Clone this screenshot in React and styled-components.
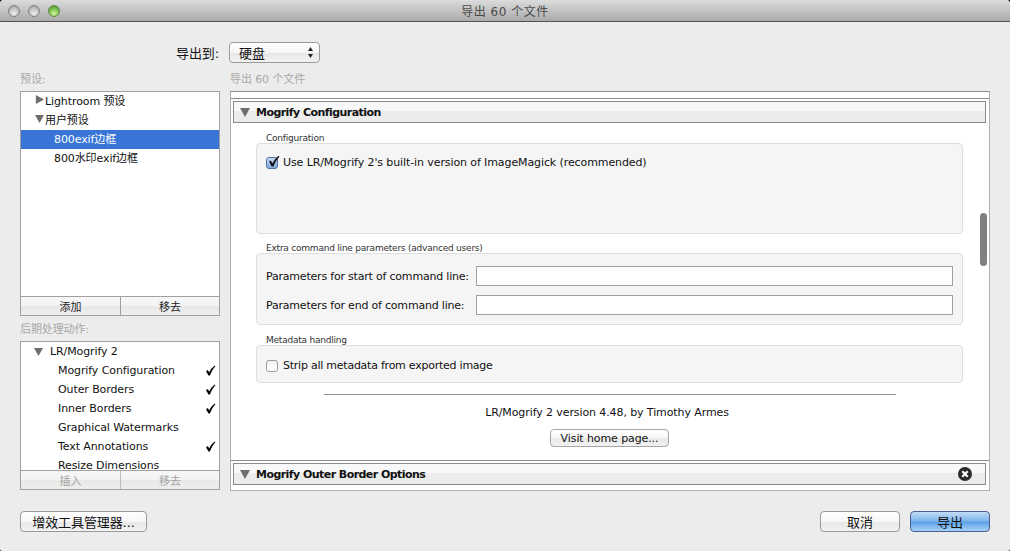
import React from 'react';
import styled, { createGlobalStyle } from 'styled-components';

const uiFont = `'DejaVu Sans', 'Noto Sans CJK SC', sans-serif`;

const presets = [
  { label: 'Lightroom 预设', depth: 0, arrow: 'right' },
  { label: '用户预设', depth: 0, arrow: 'down' },
  { label: '800exif边框', depth: 1, selected: true },
  { label: '800水印exif边框', depth: 1 }
];

const actions = [
  { label: 'Mogrify Configuration', on: true },
  { label: 'Outer Borders', on: true },
  { label: 'Inner Borders', on: true },
  { label: 'Graphical Watermarks' },
  { label: 'Text Annotations', on: true },
  { label: 'Resize Dimensions' }
];

const Triangle = ({ dir = 'down', size = 10 }) => (
  <svg width={size} height={size} viewBox="0 0 10 10">
    <path d={dir === 'down' ? 'M0 1h10L5 10z' : 'M1 0l9 5-9 5z'} fill="#6e6e6e" />
  </svg>
);

const Tick = () => (
  <svg width="11" height="11" viewBox="0 0 11 11">
    <path d="M1 6.2l1.8-1.2 1.5 2.4C5.6 4.500 7.400 2.200 9.800 0.500L10.400 1.200C8 3.800 6.300 6.800 4.900 10.600L3.500 10.600z" fill="#000" />
  </svg>
);

const App = () => (
  <Shell>
    <GlobalStyle />
    <TitleBar>
      <Lights>
        <Light />
        <Light />
        <Light $green />
      </Lights>
      <Title>导出 60 个文件</Title>
    </TitleBar>

    <Body>
      <ExportRow>
        <ExportLabel>导出到:</ExportLabel>
        <Select>
          <span>硬盘</span>
          <svg width="5" height="11" viewBox="0 0 5 11">
            <path d="M2.500 0L5 4H0zM2.500 11L0 7h5z" fill="#222" />
          </svg>
        </Select>
      </ExportRow>

      <Columns>
        <Sidebar>
          <FadedLabel>预设:</FadedLabel>
          <ListFrame $height={225}>
            <ListBody>
              {presets.map(p => (
                <PresetRow key={p.label} $depth={p.depth} $selected={p.selected}>
                  {p.arrow && <Triangle dir={p.arrow} size={9} />}
                  <span>{p.label}</span>
                </PresetRow>
              ))}
            </ListBody>
            <ButtonPair>
              <PairButton>添加</PairButton>
              <PairButton>移去</PairButton>
            </ButtonPair>
          </ListFrame>

          <ActionsLabel>后期处理动作:</ActionsLabel>
          <ListFrame $height={149}>
            <ListBody>
              <ActionGroup>
                <Triangle size={9} />
                <span>LR/Mogrify 2</span>
              </ActionGroup>
              {actions.map(a => (
                <ActionRow key={a.label}>
                  <span>{a.label}</span>
                  {a.on && <Tick />}
                </ActionRow>
              ))}
            </ListBody>
            <ButtonPair $disabled>
              <PairButton $disabled>插入</PairButton>
              <PairButton $disabled>移去</PairButton>
            </ButtonPair>
          </ListFrame>
        </Sidebar>

        <Main>
          <FadedLabel>导出 60 个文件</FadedLabel>
          <Panel>
            <TopStrip />
            <SectionHeader>
              <Triangle />
              <strong>Mogrify Configuration</strong>
            </SectionHeader>
            <PanelContent>
              <GroupLabel>Configuration</GroupLabel>
              <Group $height={91}>
                <CheckRow $spacing={-0.1}>
                  <CheckBox $on>
                    <svg width="14" height="14" viewBox="0 0 14 14">
                      <path d="M3 6.500l1.800-1 1.700 3C8 5.500 10 3 12.500 0.800L13.400 1.800C10.800 4.500 8.800 7.800 7.400 11.500H5.700z" fill="#111" />
                    </svg>
                  </CheckBox>
                  <span>Use LR/Mogrify 2's built-in version of ImageMagick (recommended)</span>
                </CheckRow>
              </Group>

              <GroupLabel $top={9}>Extra command line parameters (advanced users)</GroupLabel>
              <Group $height={72}>
                <ParamRows>
                  <ParamLabel>Parameters for start of command line:</ParamLabel>
                  <ParamInput />
                  <ParamLabel>Parameters for end of command line:</ParamLabel>
                  <ParamInput />
                </ParamRows>
              </Group>

              <GroupLabel $top={10}>Metadata handling</GroupLabel>
              <Group $height={38}>
                <CheckRow $top={13} $spacing={-0.24}>
                  <CheckBox />
                  <span>Strip all metadata from exported image</span>
                </CheckRow>
              </Group>
            </PanelContent>

            <Divider />
            <Credit>LR/Mogrify 2 version 4.48, by Timothy Armes</Credit>
            <HomeButton>Visit home page...</HomeButton>

            <SectionRule />
            <SectionHeader>
              <Triangle />
              <strong>Mogrify Outer Border Options</strong>
              <CloseIcon width="14" height="14" viewBox="0 0 14 14">
                <circle cx="7" cy="7" r="7" fill="#2b2b2b" />
                <path d="M4.300 4.300l5.400 5.400M9.700 4.300l-5.400 5.400" stroke="#fff" strokeWidth="2.200" />
              </CloseIcon>
            </SectionHeader>
            <Scrollbar />
          </Panel>
        </Main>
      </Columns>

      <Footer>
        <PushButton $width={127}>增效工具管理器...</PushButton>
        <FooterRight>
          <PushButton $width={80}>取消</PushButton>
          <PushButton $width={80} $primary>导出</PushButton>
        </FooterRight>
      </Footer>
    </Body>
  </Shell>
);

const GlobalStyle = createGlobalStyle`
  html, body {
    margin: 0;
    background: #1a1a1a;
  }
  body {
    font-family: ${uiFont};
    font-size: 11px;
    letter-spacing: -0.1px;
    color: #111;
  }
`;

const Shell = styled.div`
  width: 1010px;
  height: 551px;
  display: flex;
  flex-direction: column;
  background: #ececec;
  border-radius: 4px 4px 2px 2px;
  overflow: hidden;
`;

const TitleBar = styled.div`
  position: relative;
  height: 21px;
  flex: none;
  display: flex;
  align-items: center;
  justify-content: center;
  background: linear-gradient(#dcdcdc, #aaaaaa);
  border-bottom: 1px solid #545454;
`;

const Lights = styled.div`
  position: absolute;
  left: 8px;
  top: 5px;
  display: flex;
  gap: 8px;
`;

const Light = styled.div`
  width: 12px;
  height: 12px;
  border-radius: 50%;
  border: 1px solid ${p => (p.$green ? '#5d8a3c' : '#808080')};
  box-sizing: border-box;
  background: ${p =>
    p.$green
      ? 'radial-gradient(circle at 50% 75%, #d2f5a0, #74b84a 60%, #4e8a30)'
      : 'radial-gradient(circle at 50% 75%, #eeeeee, #bdbdbd 60%, #9a9a9a)'};
`;

const Title = styled.div`
  font-size: 12px;
  color: #4a4a4a;
  letter-spacing: 0.5px;
`;

const Body = styled.div`
  flex: 1;
  display: flex;
  flex-direction: column;
  padding: 0 20px;
`;

const ExportRow = styled.div`
  height: 21px;
  margin-top: 20px;
  display: flex;
  align-items: center;
  justify-content: flex-start;
  padding-left: 156px;
  gap: 9px;
`;

const ExportLabel = styled.span`
  font-size: 13px;
  width: 44px;
  white-space: nowrap;
`;

const Select = styled.div`
  width: 91px;
  height: 21px;
  box-sizing: border-box;
  display: flex;
  align-items: center;
  justify-content: space-between;
  padding: 0 6px 0 9px;
  font-size: 13px;
  background: linear-gradient(#ffffff, #f6f6f6 50%, #e6e6e6 52%, #f2f2f2);
  border: 1px solid #9a9a9a;
  border-radius: 4px;
`;

const Columns = styled.div`
  display: flex;
  gap: 10px;
  margin-top: 10px;
`;

const Sidebar = styled.div`
  width: 200px;
  flex: none;
  display: flex;
  flex-direction: column;
`;

const Main = styled.div`
  width: 760px;
  flex: none;
  display: flex;
  flex-direction: column;
`;

const FadedLabel = styled.div`
  height: 12px;
  line-height: 14px;
  font-size: 11px;
  color: #a8a8a8;
  margin-bottom: 6px;
  white-space: nowrap;
`;

const ActionsLabel = styled(FadedLabel)`
  margin-top: 7px;
`;

const ListFrame = styled.div`
  height: ${p => p.$height}px;
  box-sizing: border-box;
  display: flex;
  flex-direction: column;
  background: #fff;
  border: 1px solid #a0a0a0;
`;

const ListBody = styled.div`
  flex: 1;
  overflow: hidden;
`;

const PresetRow = styled.div`
  height: 19px;
  box-sizing: border-box;
  padding-bottom: 4px;
  display: flex;
  align-items: center;
  gap: 1px;
  padding-left: ${p => (p.$depth ? 33 : 14)}px;
  background: ${p => (p.$selected ? '#3875d7' : 'transparent')};
  color: ${p => (p.$selected ? '#fff' : '#111')};
  white-space: nowrap;
`;

const ActionGroup = styled.div`
  height: 19px;
  display: flex;
  align-items: center;
  gap: 7px;
  padding-left: 13px;
`;

const ActionRow = styled.div`
  height: 19px;
  display: flex;
  align-items: center;
  justify-content: space-between;
  padding: 0 3px 0 37px;
  white-space: nowrap;
`;

const ButtonPair = styled.div`
  height: 18px;
  flex: none;
  display: grid;
  grid-template-columns: 100px 1fr;
  border-top: 1px solid #a0a0a0;
  color: ${p => (p.$disabled ? '#a4a4a4' : '#222')};
`;

const PairButton = styled.div`
  display: flex;
  align-items: center;
  justify-content: center;
  background: linear-gradient(#f8f8f8, #f2f2f2 50%, #e8e8e8 52%, #eeeeee);

  &:first-child {
    border-right: 1px solid ${p => (p.$disabled ? '#bdbdbd' : '#a0a0a0')};
  }
`;

const Panel = styled.div`
  position: relative;
  height: 400px;
  box-sizing: border-box;
  background: #fff;
  border: 1px solid #b0b0b0;
  border-top-color: #8c8c8c;
  overflow: hidden;
`;

const TopStrip = styled.div`
  height: 6px;
  border-bottom: 1px solid #8c8c8c;
  margin-bottom: 2px;
`;

const SectionHeader = styled.div`
  height: 22px;
  box-sizing: border-box;
  margin: 0 3px 0 2px;
  display: flex;
  align-items: center;
  gap: 6px;
  padding-left: 6px;
  border: 1px solid #8a8a8a;
  background: linear-gradient(#f8f8f8, #f8f8f8 45%, #ececec 46%, #ececec);

  strong {
    font-weight: 700;
    letter-spacing: -0.55px;
    white-space: nowrap;
  }
`;

const CloseIcon = styled.svg`
  margin-left: auto;
  margin-right: 13px;
`;

const PanelContent = styled.div`
  padding: 10px 26px 0 25px;
`;

const GroupLabel = styled.div`
  height: 10px;
  line-height: 10px;
  margin-top: ${p => p.$top || 0}px;
  padding-left: 10px;
  font-size: 9px;
  letter-spacing: -0.22px;
  color: #333;
  white-space: nowrap;
`;

const Group = styled.div`
  height: ${p => p.$height}px;
  box-sizing: border-box;
  background: #f5f5f5;
  border: 1px solid #dedede;
  border-radius: 4px;
  padding: 0 9px;
`;

const CheckRow = styled.div`
  display: flex;
  align-items: center;
  gap: 5px;
  margin-top: ${p => p.$top ?? 12}px;
  letter-spacing: ${p => p.$spacing}px;
  white-space: nowrap;
`;

const CheckBox = styled.div`
  position: relative;
  width: 12px;
  height: 12px;
  flex: none;
  box-sizing: border-box;
  border-radius: 3px;
  border: 1px solid ${p => (p.$on ? '#4f6f9c' : '#9c9c9c')};
  background: ${p =>
    p.$on ? 'linear-gradient(#c5daf5, #7fa9dc)' : 'linear-gradient(#f0f0f0, #ffffff)'};

  svg {
    position: absolute;
    left: -1px;
    top: -3px;
  }
`;

const ParamRows = styled.div`
  display: grid;
  grid-template-columns: 210px 477px;
  grid-auto-rows: 20px;
  row-gap: 9px;
  align-items: center;
  margin-top: 12px;
`;

const ParamLabel = styled.span`
  white-space: nowrap;
  letter-spacing: -0.2px;
`;

const ParamInput = styled.div`
  height: 20px;
  box-sizing: border-box;
  background: #fff;
  border: 1px solid #a0a0a0;
`;

const Divider = styled.div`
  height: 1px;
  width: 572px;
  margin: 11px 0 0 93px;
  background: #8f8f8f;
`;

const Credit = styled.div`
  height: 14px;
  line-height: 14px;
  margin-top: 11px;
  padding-right: 6px;
  text-align: center;
  white-space: nowrap;
`;

const HomeButton = styled.div`
  width: 119px;
  height: 18px;
  box-sizing: border-box;
  margin: 9px 0 0 319px;
  display: flex;
  align-items: center;
  justify-content: center;
  border: 1px solid #a6a6a6;
  border-radius: 4px;
  background: linear-gradient(#ffffff, #f6f6f6 50%, #e8e8e8 52%, #f2f2f2);
  white-space: nowrap;
`;

const SectionRule = styled.div`
  height: 1px;
  margin: 13px 0 2px;
  background: #8c8c8c;
`;

const Scrollbar = styled.div`
  position: absolute;
  right: 2px;
  top: 121px;
  width: 7px;
  height: 53px;
  border-radius: 4px;
  background: #808080;
`;

const Footer = styled.div`
  display: flex;
  justify-content: space-between;
  margin-top: 20px;
`;

const FooterRight = styled.div`
  display: flex;
  gap: 10px;
`;

const PushButton = styled.div`
  width: ${p => p.$width}px;
  height: 21px;
  box-sizing: border-box;
  display: flex;
  align-items: center;
  justify-content: center;
  font-size: 13px;
  white-space: nowrap;
  border-radius: 4px;
  border: 1px solid ${p => (p.$primary ? '#4a5f8f' : '#9a9a9a')};
  background: ${p =>
    p.$primary
      ? 'linear-gradient(#c2dcf7, #7db4ec 48%, #5b9fe6 52%, #a5d2f7)'
      : 'linear-gradient(#ffffff, #f6f6f6 50%, #e8e8e8 52%, #f2f2f2)'};
`;

export default App;
